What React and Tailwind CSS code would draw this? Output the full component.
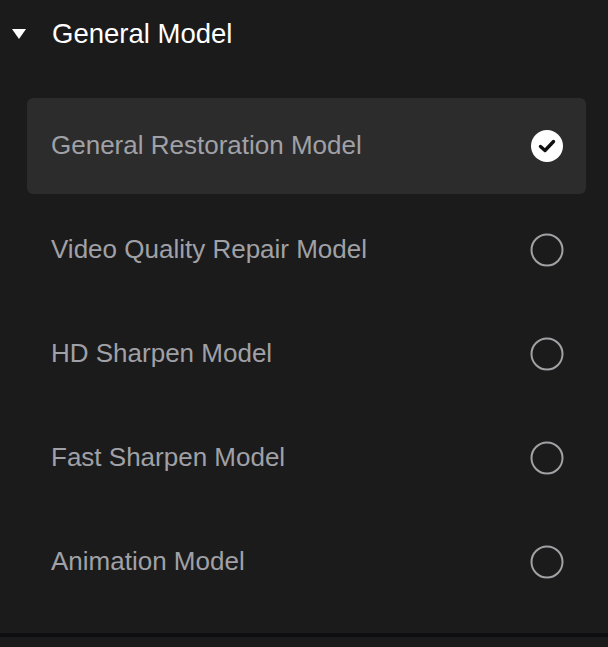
import { useState } from "react";

const models = [
  "General Restoration Model",
  "Video Quality Repair Model",
  "HD Sharpen Model",
  "Fast Sharpen Model",
  "Animation Model",
];

function Radio({ checked }) {
  if (checked) {
    return (
      <svg width="34" height="34" viewBox="0 0 34 34">
        <circle cx="17" cy="17" r="16" fill="#ffffff" />
        <path
          d="M10.5 17.5 L15 21.5 L23.5 12.5"
          fill="none"
          stroke="#111111"
          strokeWidth="3.4"
          strokeLinecap="round"
          strokeLinejoin="round"
        />
      </svg>
    );
  }
  return (
    <svg width="34" height="34" viewBox="0 0 34 34">
      <circle cx="17" cy="17" r="15.5" fill="none" stroke="#a2a2a6" strokeWidth="2" />
    </svg>
  );
}

export default function App() {
  const [selected, setSelected] = useState(0);

  return (
    <div
      className="w-[608px] h-[647px] bg-[#1b1b1b] flex flex-col"
      style={{ fontFamily: '"Liberation Sans", Arial, sans-serif' }}
    >
      {/* Header */}
      <div className="h-[67px] flex items-center pl-[12px] text-white">
        <svg width="14" height="10" viewBox="0 0 14 10" className="mr-[26px]">
          <path d="M0 0 H14 L7 10 Z" fill="#ffffff" />
        </svg>
        <span className="text-[27.5px]">General Model</span>
      </div>

      {/* Options */}
      <div className="flex flex-col gap-2 pt-[31px] pl-[27px] pr-[22px]">
        {models.map((name, i) => (
          <button
            key={name}
            onClick={() => setSelected(i)}
            className={`h-[96px] rounded-md flex items-center justify-between pl-[24px] pr-[22px] text-left ${
              selected === i ? "bg-[#2c2c2c]" : "bg-transparent"
            }`}
          >
            <span className="text-[26px] leading-[30px] text-[#a0a1a7] -mt-[2px]">{name}</span>
            <Radio checked={selected === i} />
          </button>
        ))}
      </div>

      <div className="mt-auto mb-[10px] h-[4px] bg-[#0e0e11]"></div>
    </div>
  );
}
